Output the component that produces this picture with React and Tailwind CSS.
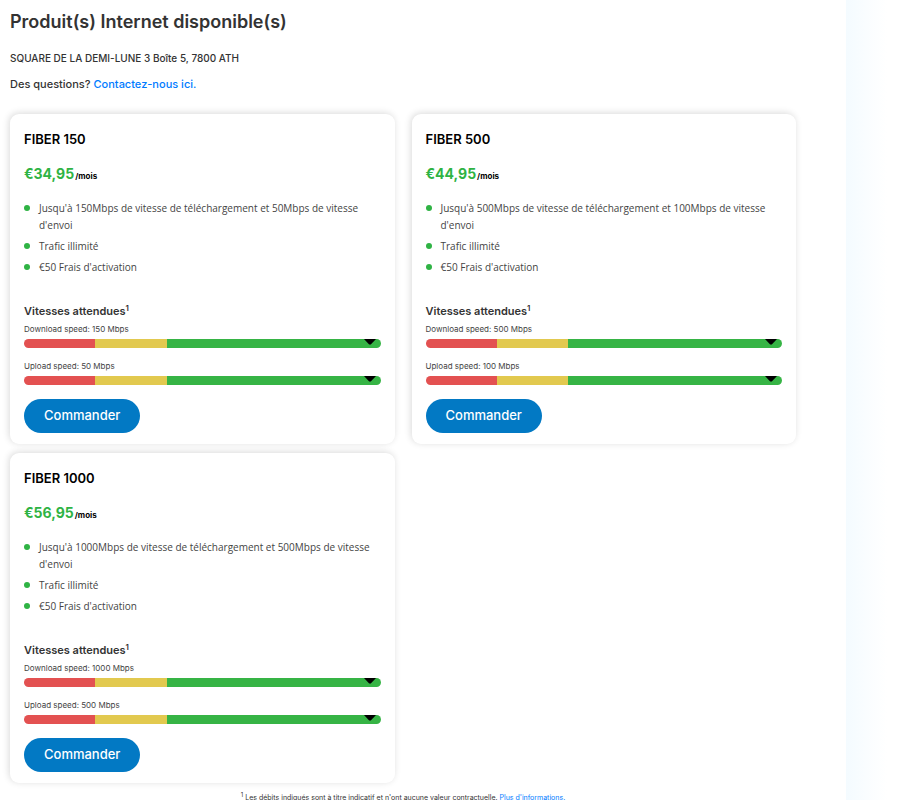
import React from 'react';

const products = [
  { name: 'FIBER 150', price: '€34,95', download: 150, upload: 50 },
  { name: 'FIBER 500', price: '€44,95', download: 500, upload: 100 },
  { name: 'FIBER 1000', price: '€56,95', download: 1000, upload: 500 },
];

const SpeedBar = ({ label, speed, className = '' }) => (
  <div className={className}>
    <p className="text-[8px] leading-[18px] text-[#444]">{`${label}: ${speed} Mbps`}</p>
    <div className="relative mt-px flex h-[9px] overflow-hidden rounded-[5px]">
      <div className="w-1/5 bg-[#e35151]" />
      <div className="w-1/5 bg-[#e2c94f]" />
      <div className="flex-1 bg-[#36b445]" />
      <svg className="absolute top-0 right-[5px] h-[6px] w-[12px]" viewBox="0 0 12 6" aria-hidden="true">
        <path d="M0 0h12L6.8 5.6h-1.6z" fill="#000" />
      </svg>
    </div>
  </div>
);

const Feature = ({ children }) => (
  <li className="flex gap-[9px]">
    <span className="mt-[5px] h-[6px] w-[6px] shrink-0 rounded-full bg-[#2fb344]" />
    <span>{children}</span>
  </li>
);

const ProductCard = ({ product }) => (
  <article className="rounded-[9px] bg-white px-[14px] pt-[14px] pb-[11px] shadow-[-1px_-1px_7px_rgba(0,0,0,0.15)]">
    <h2 className="text-[13px] leading-[22px] font-semibold text-black">{product.name}</h2>
    <p className="mt-[13px] text-[14px] leading-[22px] font-bold text-black">
      <span className="text-[#2fb344]">{product.price}</span>
      <span className="ml-px text-[8px] leading-none">/mois</span>
    </p>
    <ul className="mt-[15px] flex flex-col gap-1 font-['Open_Sans',sans-serif] text-[10px] leading-[17px] text-[#444]">
      <Feature>
        {`Jusqu'à ${product.download}Mbps de vitesse de téléchargement et ${product.upload}Mbps de vitesse d'envoi`}
      </Feature>
      <Feature>Trafic illimité</Feature>
      <Feature>€50 Frais d'activation</Feature>
    </ul>
    <h3 className="mt-[26px] text-[11px] leading-[18px] font-semibold text-[#333]">
      Vitesses attendues<sup className="text-[8px] leading-none">1</sup>
    </h3>
    <SpeedBar label="Download speed" speed={product.download} />
    <SpeedBar label="Upload speed" speed={product.upload} className="mt-[9px]" />
    <button type="button" className="mt-[14px] block h-[34px] rounded-full bg-[#0279c4] px-5 text-[13px] font-medium text-white">
      Commander
    </button>
  </article>
);

export default function App() {
  return (
    <div className="flex h-screen overflow-hidden bg-white font-['Inter',sans-serif] text-[#333]">
      <main className="flex-1 pr-[50px] pl-[10px]">
        <h1 className="pt-[9px] text-[18px] leading-[26px] font-semibold">Produit(s) Internet disponible(s)</h1>
        <p className="mt-[14px] text-[10px] leading-[18px] font-medium">SQUARE DE LA DEMI-LUNE 3 Boîte 5, 7800 ATH</p>
        <p className="mt-2 text-[11px] leading-[18px] font-medium">
          Des questions?{' '}
          <a href="#contact" className="text-[#007bff]">
            Contactez-nous ici.
          </a>
        </p>
        <section className="mt-[21px] grid grid-cols-2 gap-x-[17px] gap-y-[9px]">
          {products.map((product) => (
            <ProductCard key={product.name} product={product} />
          ))}
        </section>
        <p className="mt-[9px] text-center text-[7px] leading-[12px]">
          <sup className="text-[6px] leading-none">1</sup>
          {" Les débits indiqués sont à titre indicatif et n'ont aucune valeur contractuelle. "}
          <a href="#informations" className="text-[#007bff]">
            Plus d'informations.
          </a>
        </p>
      </main>
      <div className="w-[68px] bg-linear-to-r from-[#f4fbff] to-white to-60%" />
    </div>
  );
}
